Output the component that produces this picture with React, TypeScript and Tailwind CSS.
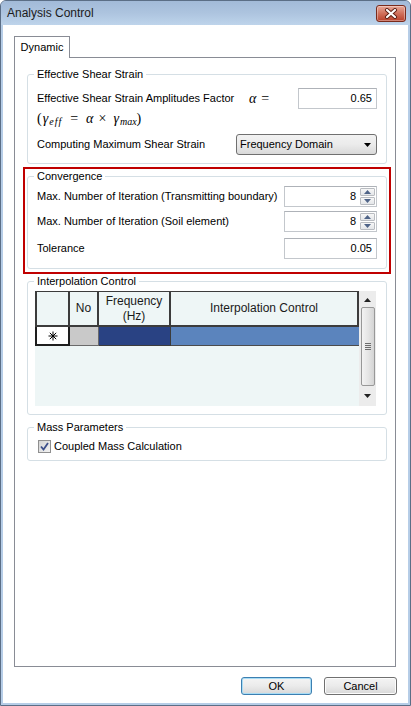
import type { ReactNode } from "react";

const ui = "font-['Liberation_Sans',Arial,sans-serif]";

export default function App() {
  return (
    <div className={`h-[706px] w-[411px] overflow-hidden bg-white text-[11px] text-black ${ui}`}>
      <div className="flex h-full flex-col rounded-t-[6px] border border-[#5b6e86] bg-[#b6cde7]">
        <TitleBar title="Analysis Control" />

        <div className="mx-[2px] mb-[2px] flex flex-1 flex-col bg-white">
          <div className="flex pl-[11px] pt-[11px]">
            <div className="relative z-10 -mb-px flex h-[22px] w-[56px] items-center justify-center border border-b-0 border-[#898c95] bg-white leading-none">
              Dynamic
            </div>
          </div>

          <div className="ml-[11px] flex h-[610px] w-[382px] flex-col border border-[#898c95] pl-[12px] pr-[8px] pt-[9px]">
            <GroupBox title="Effective Shear Strain" className="pb-[8px] pt-[7px]">
              <div className="flex h-[21px] items-center">
                <span className="w-[212px]">Effective Shear Strain Amplitudes Factor</span>
                <span className="font-['Liberation_Serif',serif] text-[14px] italic">
                  α<span className="ml-[5px] not-italic">=</span>
                </span>
                <TextBox className="ml-auto w-[79px]" value="0.65" />
              </div>
              <Formula />
              <div className="mt-[7px] flex h-[21px] items-center">
                <span>Computing Maximum Shear Strain</span>
                <ComboBox className="ml-auto w-[141px]" value="Frequency Domain" />
              </div>
            </GroupBox>

            <div className="-mx-[4px] mt-[3px] border-2 border-[#c00000] px-[2px] pb-[3px]">
              <GroupBox title="Convergence" className="pb-[9px] pt-[3px]">
                <FieldRow label="Max. Number of Iteration (Transmitting boundary)">
                  <SpinBox value="8" />
                </FieldRow>
                <FieldRow className="mt-[4px]" label="Max. Number of Iteration (Soil element)">
                  <SpinBox value="8" />
                </FieldRow>
                <FieldRow className="mt-[6px]" label="Tolerance">
                  <TextBox className="w-[93px]" value="0.05" />
                </FieldRow>
              </GroupBox>
            </div>

            <GroupBox title="Interpolation Control" className="pb-[8px] pt-[3px]" contentClassName="pl-[7px]">
              <InterpolationGrid />
            </GroupBox>

            <GroupBox title="Mass Parameters" className="mt-[5px] pb-[7px] pt-[6px]">
              <label className="flex h-[13px] items-center pl-px">
                <CheckBox />
                <span className="ml-[3px]">Coupled Mass Calculation</span>
              </label>
            </GroupBox>
          </div>

          <div className="mt-[10px] flex justify-end gap-[12px] pr-[11px]">
            <DialogButton label="OK" primary className="w-[71px]" />
            <DialogButton label="Cancel" className="w-[73px]" />
          </div>
        </div>
      </div>
    </div>
  );
}

function TitleBar({ title }: { title: string }) {
  return (
    <div className="flex h-[24px] items-center rounded-t-[5px] bg-gradient-to-b from-[#a2bad8] via-[#adc4df] to-[#bed4eb] pl-[6px] pr-[4px]">
      <span className="text-[12px] leading-none text-[#1b1b1b]">{title}</span>
      <button
        aria-label="Close"
        className="ml-auto mt-[1px] flex h-[17px] w-[30px] items-center justify-center rounded-[3px] border border-[#7a2b1c] bg-gradient-to-b from-[#e7a797] via-[#d0705b] to-[#b8402a] shadow-[inset_0_0_0_1px_rgba(255,255,255,0.35)]"
      >
        <svg width="14" height="11" viewBox="0 0 14 11">
          <path d="M3 2 L11 9 M11 2 L3 9" stroke="#5a1d12" strokeWidth="4" strokeLinecap="round" />
          <path d="M3 2 L11 9 M11 2 L3 9" stroke="#ffffff" strokeWidth="2.2" strokeLinecap="round" />
        </svg>
      </button>
    </div>
  );
}

type GroupBoxProps = {
  title: string;
  className?: string;
  contentClassName?: string;
  children: ReactNode;
};

// Windows-style group box: the legend sits on the top border, 9px in from the left edge
function GroupBox({ title, className = "", contentClassName = "pl-[9px]", children }: GroupBoxProps) {
  return (
    <fieldset className={`rounded-[3px] border border-[#d5dfe5] pr-[9px] ${className}`}>
      <legend className="ml-[6px] h-[14px] px-[3px] leading-[14px]">{title}</legend>
      <div className={contentClassName}>{children}</div>
    </fieldset>
  );
}

function Formula() {
  return (
    <div className="flex h-[18px] items-center font-['Liberation_Serif',serif] text-[14px]">
      <span>(</span>
      <span className="ml-[1px] italic">γ</span>
      <span className="relative top-[3px] ml-px text-[10px] italic tracking-[1px]">eff</span>
      <span className="mx-[8px]">=</span>
      <span className="italic">α</span>
      <span className="mx-[5px]">×</span>
      <span className="ml-[2px] italic">γ</span>
      <span className="relative top-[3px] ml-px text-[10px] italic">max</span>
      <span>)</span>
    </div>
  );
}

function FieldRow({ label, className = "", children }: { label: string; className?: string; children: ReactNode }) {
  return (
    <div className={`flex h-[21px] items-center ${className}`}>
      <span>{label}</span>
      <div className="ml-auto">{children}</div>
    </div>
  );
}

function TextBox({ value, className = "" }: { value: string; className?: string }) {
  return (
    <div
      className={`flex h-[21px] items-center justify-end border border-[#c3c7cc] border-t-[#aeb2b8] bg-white pr-[4px] ${className}`}
    >
      {value}
    </div>
  );
}

function SpinBox({ value }: { value: string }) {
  return (
    <div className="flex h-[21px] w-[93px] items-stretch border border-[#c3c7cc] border-t-[#aeb2b8] bg-white">
      <div className="flex flex-1 items-center justify-end pr-[4px]">{value}</div>
      <div className="flex w-[16px] flex-col gap-px py-px pr-px">
        <SpinArrow up />
        <SpinArrow />
      </div>
    </div>
  );
}

function SpinArrow({ up = false }: { up?: boolean }) {
  return (
    <div className="flex flex-1 items-center justify-center rounded-[1px] border border-[#b9bcc1] bg-gradient-to-b from-[#f7f7f7] to-[#e4e6e9]">
      <svg width="7" height="4" viewBox="0 0 7 4">
        <path d={up ? "M0 4 L3.5 0 L7 4 Z" : "M0 0 L3.5 4 L7 0 Z"} fill="#4f6488" />
      </svg>
    </div>
  );
}

function ComboBox({ value, className = "" }: { value: string; className?: string }) {
  return (
    <div
      className={`flex h-[21px] items-center rounded-[3px] border border-[#707070] bg-gradient-to-b from-[#f2f2f2] via-[#ebebeb] to-[#d9d9d9] pl-[3px] pr-[5px] ${className}`}
    >
      <span>{value}</span>
      <svg className="ml-auto" width="7" height="4" viewBox="0 0 7 4">
        <path d="M0 0 L7 0 L3.5 4 Z" fill="#000" />
      </svg>
    </div>
  );
}

const gridColumns = [
  { label: "", width: "w-[35px] border-l-2" },
  { label: "No", width: "w-[29px]" },
  { label: "Frequency\n(Hz)", width: "w-[72px]" },
  { label: "Interpolation Control", width: "w-[188px]" },
];

function InterpolationGrid() {
  return (
    <div className="flex h-[115px] w-[341px] bg-[#eef6f6] font-['Liberation_Sans',Arial,sans-serif] text-[12px] text-[#1a1a1a]">
      <div className="flex w-[324px] flex-col">
        <div className="flex h-[36px] border-t border-[#3c3c3c]">
          {gridColumns.map((col) => (
            <div
              key={col.label || "row-header"}
              className={`flex items-center justify-center whitespace-pre-line border-b-2 border-r-2 border-[#3c3c3c] text-center leading-[15px] ${col.width}`}
            >
              {col.label}
            </div>
          ))}
        </div>
        <div className="flex h-[19px]">
          <div className="flex w-[35px] items-center justify-center border-b-2 border-l-2 border-r-2 border-[#1e1e1e] bg-white">
            <svg width="10" height="10" viewBox="0 0 10 10">
              <path d="M5 0.5 V9.5 M0.5 5 H9.5 M1.8 1.8 L8.2 8.2 M8.2 1.8 L1.8 8.2" stroke="#000" strokeWidth="1" />
            </svg>
          </div>
          <div className="w-[29px] border-b border-r border-[#6a6a6a] bg-[#c9c9c9]" />
          <div className="w-[72px] border-b border-r border-[#3c3c3c] bg-[#294283]" />
          <div className="w-[188px] border-b border-[#4b4b4b] bg-[#5b84bd]" />
        </div>
      </div>
      <ScrollBar />
    </div>
  );
}

function ScrollBar() {
  return (
    <div className="flex w-[17px] flex-col items-center bg-[#ececec] py-[4px]">
      <svg width="7" height="4" viewBox="0 0 7 4" className="mt-[3px]">
        <path d="M0 4 L3.5 0 L7 4 Z" fill="#222" />
      </svg>
      <div className="mt-[5px] flex h-[79px] w-[14px] flex-col items-center justify-center gap-px rounded-[2px] border border-[#989898] bg-gradient-to-r from-[#f3f3f3] via-[#e6e6e6] to-[#d4d4d4]">
        <span className="h-px w-[6px] bg-[#6d6d6d]" />
        <span className="h-px w-[6px] bg-[#6d6d6d]" />
        <span className="h-px w-[6px] bg-[#6d6d6d]" />
        <span className="h-px w-[6px] bg-[#6d6d6d]" />
      </div>
      <svg width="7" height="4" viewBox="0 0 7 4" className="mt-[8px]">
        <path d="M0 0 L7 0 L3.5 4 Z" fill="#222" />
      </svg>
    </div>
  );
}

function CheckBox() {
  return (
    <span className="flex h-[13px] w-[13px] items-center justify-center border border-[#8f8f8f] bg-gradient-to-br from-[#d4d4d4] to-[#f2f2f2]">
      <svg width="9" height="9" viewBox="0 0 9 9">
        <path d="M1 4.5 L3.5 7.5 L8 1" fill="none" stroke="#3c4f8a" strokeWidth="1.8" />
      </svg>
    </span>
  );
}

function DialogButton({ label, primary = false, className = "" }: { label: string; primary?: boolean; className?: string }) {
  return (
    <button
      className={`flex h-[18px] items-center justify-center rounded-[3px] border bg-gradient-to-b from-[#f4f4f4] via-[#ebebeb] to-[#d8d8d8] leading-none ${
        primary ? "border-[#3c7fb1] shadow-[inset_0_0_0_1px_#a8dcf5]" : "border-[#707070] shadow-[inset_0_0_0_1px_#fcfcfc]"
      } ${className}`}
    >
      {label}
    </button>
  );
}
